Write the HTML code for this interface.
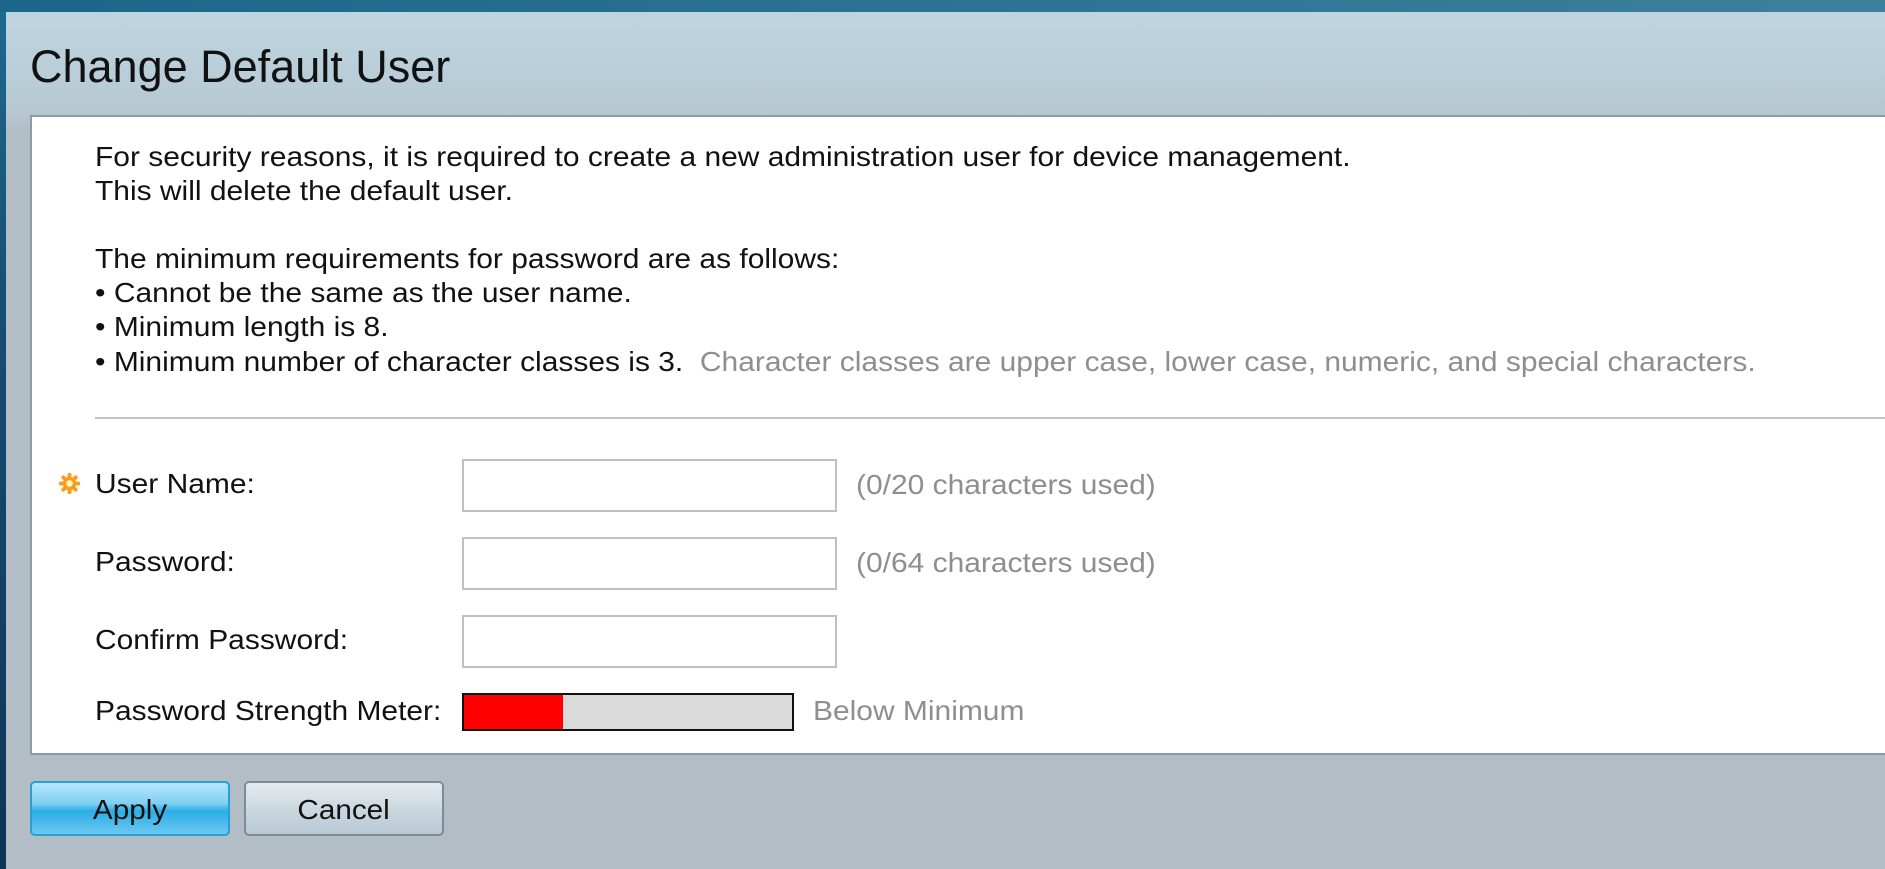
<!DOCTYPE html>
<html><head><meta charset="utf-8"><style>
*{margin:0;padding:0;box-sizing:border-box}
html,body{width:1885px;height:869px;overflow:hidden}
body{position:relative;font-family:"Liberation Sans",Arial,sans-serif;background:linear-gradient(180deg,#1f6a90 0,#164e73 300px,#0e3456 869px)}
.topbar{position:absolute;left:0;top:0;width:1885px;height:12px;background:linear-gradient(90deg,#1c6689,#3d7f9e)}
.dlg{position:absolute;left:6px;top:12px;right:0;bottom:0;background:linear-gradient(180deg,#bed5e0 0,#b6c9d3 100px,#b3bdc6 120px,#b3bdc6 100%)}
.title{position:absolute;left:24px;top:29px;font-size:45px;color:#111}
.panel{position:absolute;left:24px;top:103px;right:0;height:640px;background:#fff;border:2px solid #8b9ca7;border-right:none}
.t{position:absolute;font-size:28px;color:#111;white-space:nowrap;transform:scaleX(1.07);transform-origin:0 0}
.g{color:#8e8e8e}
.sep{position:absolute;left:63px;right:0;top:300px;height:2px;background:#bcc4ca}
.inp{position:absolute;left:430px;width:375px;height:53px;border:2px solid #c0c0c0;background:#fff}
.meter{position:absolute;left:430px;top:576px;width:332px;height:38px;border:2px solid #111;background:#dadada}
.meter div{width:99px;height:100%;background:#f00}
.btn{position:absolute;top:781px;width:200px;height:55px;border-radius:5px;font-size:28px;text-align:center;line-height:53px;color:#111}
.btn span{display:inline-block;transform:scaleX(1.06)}
.apply{left:30px;border:2px solid #27a0d8;background:linear-gradient(180deg,#b8e6fa 0,#7fd0f2 40%,#2aaee6 55%,#6cc8f0 100%)}
.cancel{left:244px;border:2px solid #7f8a92;background:linear-gradient(180deg,#e4ebf0 0,#ccd8e0 50%,#b8c8d3 100%)}
</style></head><body>
<div class="topbar"></div>
<div class="dlg">
<div class="title">Change Default User</div>
<div class="panel">
<div class="t" style="left:63px;top:24px">For security reasons, it is required to create a new administration user for device management.</div>
<div class="t" style="left:63px;top:58px">This will delete the default user.</div>
<div class="t" style="left:63px;top:126px">The minimum requirements for password are as follows:</div>
<div class="t" style="left:63px;top:160px">• Cannot be the same as the user name.</div>
<div class="t" style="left:63px;top:194px">• Minimum length is 8.</div>
<div class="t" style="left:63px;top:229px">• Minimum number of character classes is 3. &nbsp;<span class="g">Character classes are upper case, lower case, numeric, and special characters.</span></div>
<div class="sep"></div>
<svg style="position:absolute;left:26px;top:355px" width="23" height="23" viewBox="0 0 24 24"><g fill="#ff9a1a"><circle cx="12" cy="12" r="7"/><g><rect x="10" y="1" width="4" height="6" rx="1.5"/><rect x="10" y="17" width="4" height="6" rx="1.5"/><rect x="1" y="10" width="6" height="4" rx="1.5"/><rect x="17" y="10" width="6" height="4" rx="1.5"/></g><g transform="rotate(45 12 12)"><rect x="10" y="1" width="4" height="6" rx="1.5"/><rect x="10" y="17" width="4" height="6" rx="1.5"/><rect x="1" y="10" width="6" height="4" rx="1.5"/><rect x="17" y="10" width="6" height="4" rx="1.5"/></g></g><circle cx="12" cy="12" r="3.5" fill="#fff6c0"/></svg>
<div class="t" style="left:63px;top:351px">User Name:</div>
<div class="inp" style="top:342px"></div>
<div class="t g" style="left:824px;top:352px">(0/20 characters used)</div>
<div class="t" style="left:63px;top:429px">Password:</div>
<div class="inp" style="top:420px"></div>
<div class="t g" style="left:824px;top:430px">(0/64 characters used)</div>
<div class="t" style="left:63px;top:507px">Confirm Password:</div>
<div class="inp" style="top:498px"></div>
<div class="t" style="left:63px;top:578px">Password Strength Meter:</div>
<div class="meter"><div></div></div>
<div class="t g" style="left:781px;top:578px">Below Minimum</div>
</div>
</div>
<div class="btn apply"><span>Apply</span></div>
<div class="btn cancel"><span>Cancel</span></div>
</body></html>
